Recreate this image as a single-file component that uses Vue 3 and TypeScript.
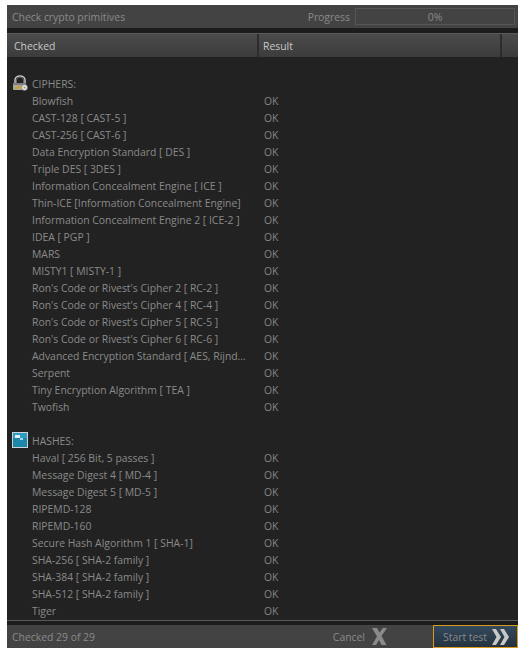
<script setup lang="ts">
interface Row { name: string; result?: string }
const ciphers: string[] = ['Blowfish','CAST-128 [ CAST-5 ]','CAST-256 [ CAST-6 ]','Data Encryption Standard [ DES ]','Triple DES [ 3DES ]','Information Concealment Engine [ ICE ]','Thin-ICE [Information Concealment Engine]','Information Concealment Engine 2 [ ICE-2 ]','IDEA [ PGP ]','MARS','MISTY1 [ MISTY-1 ]',"Ron's Code or Rivest's Cipher 2 [ RC-2 ]","Ron's Code or Rivest's Cipher 4 [ RC-4 ]","Ron's Code or Rivest's Cipher 5 [ RC-5 ]","Ron's Code or Rivest's Cipher 6 [ RC-6 ]",'Advanced Encryption Standard [ AES, Rijnd...','Serpent','Tiny Encryption Algorithm [ TEA ]','Twofish']
const hashes: string[] = ['Haval [ 256 Bit, 5 passes ]','Message Digest 4 [ MD-4 ]','Message Digest 5 [ MD-5 ]','RIPEMD-128','RIPEMD-160','Secure Hash Algorithm 1 [ SHA-1]','SHA-256 [ SHA-2 family ]','SHA-384 [ SHA-2 family ]','SHA-512 [ SHA-2 family ]','Tiger']
const rowsC: Row[] = ciphers.map(name => ({ name, result: 'OK' }))
const rowsH: Row[] = hashes.map(name => ({ name, result: 'OK' }))
</script>

<template>
  <div class="page">
    <div class="window">
      <div class="topbar">
        <span class="title">Check crypto primitives</span>
        <span class="progress-label">Progress</span>
        <div class="progress">0%</div>
      </div>
      <div class="table">
        <div class="thead">
          <div class="th c1">Checked</div>
          <div class="th c2">Result</div>
          <div class="th c3"></div>
        </div>
        <div class="tbody">
          <div class="group">
            <svg class="icon" viewBox="0 0 16 16" width="16" height="16">
              <path d="M3 8V5a5 4 0 0 1 10 0V8" fill="none" stroke="#c4c4c4" stroke-width="1.5"/>
              <path d="M4.500 8V5a3.500 3 0 0 1 7 0V8" fill="none" stroke="#6a6a6a" stroke-width="1"/>
              <rect x="1" y="8" width="13" height="7" rx="1" fill="#a8a8a8"/>
              <rect x="1" y="8" width="13" height="2" fill="#7c7c7c"/>
              <path d="M2 13l3-2h3l1 1-2 2H3z" fill="#c9a23a"/>
              <circle cx="12.500" cy="12.500" r="3" fill="#e6e6e6" stroke="#666" stroke-width="0.6"/>
              <circle cx="12.500" cy="12.500" r="1" fill="#b8963a"/>
            </svg>
            <span>CIPHERS:</span>
          </div>
          <div v-for="r in rowsC" :key="r.name" class="row">
            <span class="name">{{ r.name }}</span><span class="res">{{ r.result }}</span>
          </div>
          <div class="spacer"></div>
          <div class="group">
            <svg class="icon" viewBox="0 0 16 16" width="16" height="16">
              <rect x="0.500" y="0.500" width="15" height="15" fill="#1d86ab" stroke="#c9d3d6"/>
              <rect x="1" y="1" width="14" height="5" fill="#2f9cc4"/>
              <rect x="3" y="3" width="5" height="3" fill="#e6f2f7"/>
              <rect x="8" y="6" width="3" height="2" fill="#a9d6e8"/>
            </svg>
            <span>HASHES:</span>
          </div>
          <div v-for="r in rowsH" :key="r.name" class="row">
            <span class="name">{{ r.name }}</span><span class="res">{{ r.result }}</span>
          </div>
        </div>
      </div>
      <div class="footer">
        <span class="checked">Checked 29 of 29</span>
        <div class="cancel">
          <span>Cancel</span>
          <svg width="15" height="17" viewBox="0 0 15 17"><path d="M0 0h5l2.500 4.500L11 0h4L9.500 8l5 9h-5L7 12l-3 5H0l5-8.500z" fill="#8a8a8a"/></svg>
        </div>
        <div class="start">
          <span>Start test</span>
          <svg width="17" height="16" viewBox="0 0 17 16"><path d="M0 0h4l5 8-5 8H0l4.500-8zM8 0h4l5 8-5 8H8l4.500-8z" fill="#c8c8c8"/></svg>
        </div>
      </div>
    </div>
  </div>
</template>

<style>
html, body { margin: 0; background: #fff; }
</style>

<style scoped>
.page {
  width: 524px;
  height: 654px;
  box-sizing: border-box;
  padding: 5px 6px 6px 7px;
  font-family: "Open Sans", "Noto Sans", sans-serif;
  font-size: 10.4px;
}
.window {
  height: 100%;
  display: flex;
  flex-direction: column;
  background: #1c1c1c;
}
.topbar {
  height: 23px;
  flex: none;
  display: flex;
  align-items: center;
  padding: 0 3px 0 5px;
  background: #434343;
  color: #8a8a8a;
}
.title { flex: 1; padding-top: 1px; }
.progress-label { margin-right: 5px; padding-top: 1px; }
.progress {
  width: 160px;
  height: 17px;
  box-sizing: border-box;
  border: 1px solid #565656;
  line-height: 16px;
  text-align: center;
}
.table { flex: 1; display: flex; flex-direction: column; margin-top: 5px; min-height: 0; border-top: 1px solid #5a5a5a; border-bottom: 1px solid #5a5a5a; }
.thead {
  height: 23px;
  flex: none;
  display: flex;
  background: linear-gradient(#4b4b4b, #3c3c3c);
  color: #c8c8c8;
}
.th { box-sizing: border-box; line-height: 24px; border-right: 2px solid #2c2c2c; }
.c1 { width: 252px; padding-left: 7px; }
.c2 { width: 243px; padding-left: 4px; }
.c3 { flex: 1; border: 0; }
.tbody { flex: 1; background: #222; padding-top: 19px; color: #8a8a8a; overflow: hidden; }
.group { height: 17px; display: flex; align-items: center; line-height: 17px; position: relative; padding-left: 25px; }
.icon { position: absolute; left: 5px; top: -1px; }
.row { height: 17px; line-height: 17px; display: flex; padding-left: 25px; }
.name { width: 232px; flex: none; white-space: nowrap; }
.res { color: #858585; }
.spacer { height: 17px; }
.footer {
  height: 23px;
  flex: none;
  margin-top: 4px;
  display: flex;
  align-items: center;
  background: #434343;
  color: #8a8a8a;
  padding-left: 5px;
}
.checked { flex: 1; }
.cancel { display: flex; align-items: center; gap: 7px; margin-right: 46px; }
.start {
  width: 85px;
  height: 23px;
  box-sizing: border-box;
  border: 1px solid #d99a1e;
  background: linear-gradient(#33495c, #25323e);
  display: flex;
  align-items: center;
  gap: 5px;
  padding-left: 9px;
}
</style>
